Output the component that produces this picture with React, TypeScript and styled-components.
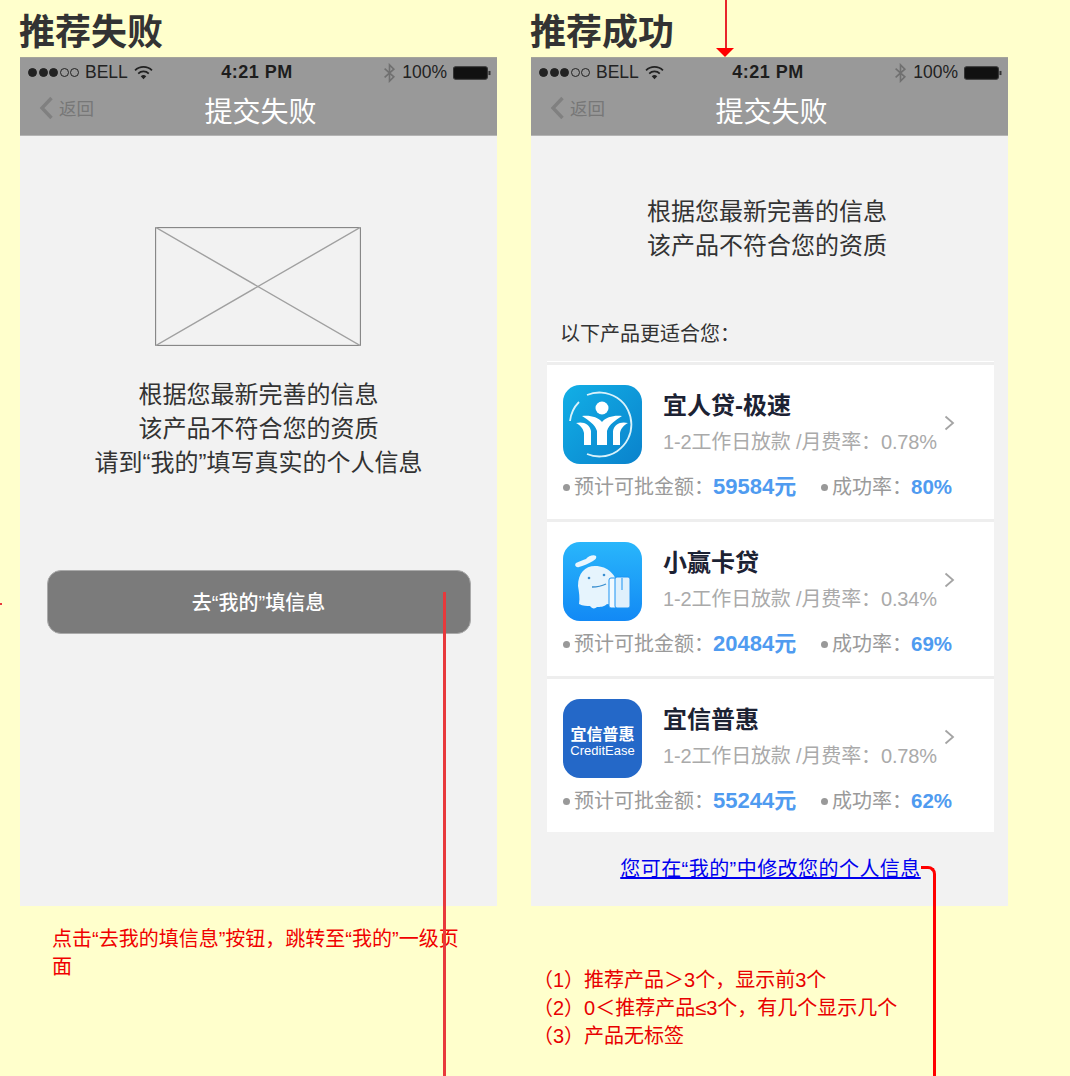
import React from 'react'
import styled, { createGlobalStyle } from 'styled-components'

interface Product {
  name: string
  rate: string
  amount: string
  success: string
  Icon: React.ComponentType
}

const GlobalStyle = createGlobalStyle`
  html, body {
    margin: 0;
    padding: 0;
    background: #ffffcc;
  }
  body {
    font-family: "Liberation Sans", "Noto Sans CJK SC", sans-serif;
  }
`

const WifiIcon = () => (
  <svg width="19" height="15" viewBox="0 0 18 14">
    <path d="M1 5a11.500 11.500 0 0 1 16 0" fill="none" stroke="#222" strokeWidth="1.700" />
    <path d="M4 8a7.200 7.200 0 0 1 10 0" fill="none" stroke="#222" strokeWidth="1.700" />
    <path d="M9 13.500 6.400 10.600a3.800 3.800 0 0 1 5.200 0z" fill="#222" />
  </svg>
)

const BluetoothIcon = () => (
  <svg width="13" height="20" viewBox="0 0 12 18">
    <path d="M1.500 5 10 12.500 6 16.500V1.500L10 5.500 1.500 13" fill="none" stroke="#707070" strokeWidth="1.500" />
  </svg>
)

const BatteryIcon = () => (
  <svg width="38" height="14" viewBox="0 0 37 13">
    <rect x="0.500" y="0.500" width="33" height="12" rx="2" fill="#111" stroke="#333" />
    <rect x="34.500" y="4.500" width="2" height="4" fill="#333" />
  </svg>
)

const BackIcon = () => (
  <svg width="15" height="24" viewBox="0 0 15 24">
    <path d="M12.500 2 3 12l9.500 10" fill="none" stroke="#808080" strokeWidth="3.400" />
  </svg>
)

const ChevronIcon = () => (
  <svg width="11" height="16" viewBox="0 0 11 16">
    <path d="M1.500 1.500 9 8l-7.500 6.500" fill="none" stroke="#a4a4a4" strokeWidth="1.800" />
  </svg>
)

const YirenIcon = () => (
  <svg width="79" height="79" viewBox="0 0 79 79">
    <defs>
      <linearGradient id="yiren" x1="0" y1="0" x2="1" y2="1">
        <stop offset="0" stopColor="#12afe6" />
        <stop offset="1" stopColor="#0a82cc" />
      </linearGradient>
    </defs>
    <rect width="79" height="79" rx="17" fill="url(#yiren)" />
    <path d="M7 36A32 32 0 0 1 16 17" fill="none" stroke="#d9f2fb" strokeWidth="1.800" />
    <path d="M24 10A32 32 0 1 1 24 69" fill="none" stroke="#d9f2fb" strokeWidth="1.800" />
    <circle cx="39" cy="23" r="6.500" fill="#fff" />
    <path d="M19 31c8-1 16 1 20 6 4-5 12-7 20-6-6 4-13 8-15 15v14H34V46c-2-7-9-11-15-15z" fill="#fff" />
    <path d="M13 38c7-2 14 1 15 8v14h-7V48c-1-5-4-8-8-10z" fill="#fff" />
    <path d="M65 38c-7-2-14 1-15 8v14h7V48c1-5 4-8 8-10z" fill="#fff" />
  </svg>
)

const YingIcon = () => (
  <svg width="79" height="79" viewBox="0 0 79 79">
    <defs>
      <linearGradient id="ying" x1="0" y1="0" x2="0" y2="1">
        <stop offset="0" stopColor="#29b6fb" />
        <stop offset="1" stopColor="#1289f5" />
      </linearGradient>
    </defs>
    <rect width="79" height="79" rx="17" fill="url(#ying)" />
    <path d="M13 21c4-2 7-3 10-4 2-3 8-5 10-3 1 2-1 4-3 5-5 3-10 5-14 6-3 1-5-2-3-4z" fill="#eaf6fe" />
    <path d="M15 44c0-13 7-20 17-20 13 0 22 9 23 22l1 14c-5 1-8 3-12 2-3 3-7 3-10 3-2 2-5 2-7-1-3 0-7 0-11-2 1-6 0-12-1-18z" fill="#e6f4fd" />
    <path d="M29 45c6 0 10-1 14-3" fill="none" stroke="#3a8fd0" strokeWidth="1.300" />
    <circle cx="26" cy="36" r="1.300" fill="#3a8fd0" />
    <circle cx="41" cy="33" r="1.300" fill="#3a8fd0" />
    <rect x="46" y="36" width="8" height="30" rx="2" fill="#f2faff" stroke="#1b93f3" />
    <rect x="52" y="35" width="15" height="31" rx="2" fill="#dff0fc" stroke="#1b93f3" />
    <path d="M59 36v12" stroke="#1b93f3" strokeWidth="1" />
  </svg>
)

const CreditEaseIcon = () => (
  <LogoTile>
    <LogoCn>宜信普惠</LogoCn>
    <LogoEn>CreditEase</LogoEn>
  </LogoTile>
)

const PRODUCTS: Product[] = [
  { name: '宜人贷-极速', rate: '0.78%', amount: '59584元', success: '80%', Icon: YirenIcon },
  { name: '小赢卡贷', rate: '0.34%', amount: '20484元', success: '69%', Icon: YingIcon },
  { name: '宜信普惠', rate: '0.78%', amount: '55244元', success: '62%', Icon: CreditEaseIcon },
]

const PhoneHeader = () => (
  <Header>
    <StatusBar>
      <StatusSide>
        <Signal>
          <SignalDot $on />
          <SignalDot $on />
          <SignalDot $on />
          <SignalDot />
          <SignalDot />
        </Signal>
        BELL
        <WifiIcon />
      </StatusSide>
      <StatusTime>4:21 PM</StatusTime>
      <StatusSide $end>
        <BluetoothIcon />
        100%
        <BatteryIcon />
      </StatusSide>
    </StatusBar>
    <NavBar>
      <BackLink>
        <BackIcon />
        返回
      </BackLink>
      <NavTitle>提交失败</NavTitle>
    </NavBar>
  </Header>
)

const App = () => (
  <Canvas>
    <GlobalStyle />
    <Column>
      <Heading>推荐失败</Heading>
      <Phone>
        <PhoneHeader />
        <FailBody>
          <Placeholder viewBox="0 0 206 119" preserveAspectRatio="none">
            <rect x="0.500" y="0.500" width="205" height="118" fill="none" stroke="#888" strokeWidth="1.300" />
            <path d="M0 0 206 119M206 0 0 119" stroke="#a0a0a0" strokeWidth="1.400" />
          </Placeholder>
          <FailMessage>
            根据您最新完善的信息
            <br />
            该产品不符合您的资质
            <br />
            请到“我的”填写真实的个人信息
          </FailMessage>
          <PrimaryButton>去“我的”填信息</PrimaryButton>
        </FailBody>
      </Phone>
      <FailNote>点击“去我的填信息”按钮，跳转至“我的”一级页面</FailNote>
    </Column>

    <Column>
      <Heading>推荐成功</Heading>
      <Phone>
        <PhoneHeader />
        <SuccessBody>
          <SuccessMessage>
            根据您最新完善的信息
            <br />
            该产品不符合您的资质
          </SuccessMessage>
          <ListTitle>以下产品更适合您：</ListTitle>
          <ProductList>
            {PRODUCTS.map(({ name, rate, amount, success, Icon }) => (
              <ProductCard key={name}>
                <CardTop>
                  <IconSlot>
                    <Icon />
                  </IconSlot>
                  <CardText>
                    <ProductName>{name}</ProductName>
                    <ProductMeta>1-2工作日放款 /月费率：{rate}</ProductMeta>
                  </CardText>
                  <ChevronSlot>
                    <ChevronIcon />
                  </ChevronSlot>
                </CardTop>
                <StatRow>
                  <Stat $wide>
                    <Bullet />
                    预计可批金额：<StatValue>{amount}</StatValue>
                  </Stat>
                  <Stat>
                    <Bullet />
                    成功率：<StatValue $small>{success}</StatValue>
                  </Stat>
                </StatRow>
              </ProductCard>
            ))}
          </ProductList>
          <EditLink href="#">您可在“我的”中修改您的个人信息</EditLink>
        </SuccessBody>
      </Phone>
      <RuleNote>
        （1）推荐产品＞3个，显示前3个
        <br />
        （2）0＜推荐产品≤3个，有几个显示几个
        <br />
        （3）产品无标签
      </RuleNote>
    </Column>

    <TopArrowLine />
    <TopArrowHead />
    <EdgeMark />
    <ButtonConnector />
    <LinkConnector />
  </Canvas>
)

const Canvas = styled.div`
  position: relative;
  display: flex;
  gap: 34px;
  width: 1070px;
  height: 1076px;
  padding-left: 20px;
  box-sizing: border-box;
  overflow: hidden;
  background: #ffffcc;
`

const Column = styled.div`
  display: flex;
  flex-direction: column;
  width: 477px;
`

const Heading = styled.h1`
  height: 57px;
  margin: 0 0 0 -1px;
  font-size: 36px;
  font-weight: 700;
  line-height: 66px;
  color: #333;
`

const Phone = styled.div`
  display: flex;
  flex-direction: column;
  height: 849px;
  background: #f2f2f2;
`

const Header = styled.header`
  display: flex;
  flex-direction: column;
  height: 79px;
  background: #999;
  border-top: 1px solid #a5a59a;
  border-bottom: 1px solid #b4b4b4;
  box-sizing: border-box;
`

const StatusBar = styled.div`
  display: grid;
  grid-template-columns: 1fr auto 1fr;
  align-items: center;
  height: 29px;
  padding: 0 6px 0 8px;
  font-size: 17.500px;
  color: #222;
`

const StatusSide = styled.div<{ $end?: boolean }>`
  display: flex;
  align-items: center;
  justify-content: ${(p) => (p.$end ? 'flex-end' : 'flex-start')};
  gap: 6px;
`

const StatusTime = styled.div`
  margin-right: 5px;
  font-size: 18px;
  font-weight: 700;
  letter-spacing: 0.500px;
  color: #1d1d1d;
`

const Signal = styled.span`
  display: flex;
  gap: 1.500px;
`

const SignalDot = styled.span<{ $on?: boolean }>`
  width: 9px;
  height: 9px;
  box-sizing: border-box;
  border: 1px solid #222;
  border-radius: 50%;
  background: ${(p) => (p.$on ? '#222' : 'transparent')};
`

const NavBar = styled.nav`
  display: grid;
  grid-template-columns: 1fr auto 1fr;
  align-items: center;
  flex: 1;
  padding: 0 15px 0 19px;
`

const BackLink = styled.span`
  display: flex;
  align-items: center;
  gap: 5px;
  margin-bottom: 7px;
  font-size: 17.500px;
  color: #777;
`

const NavTitle = styled.div`
  margin-bottom: 2px;
  font-size: 28px;
  color: #fff;
`

const FailBody = styled.main`
  display: flex;
  flex-direction: column;
  align-items: center;
  padding: 91px 26px 0 24px;
`

const Placeholder = styled.svg`
  flex: none;
  width: 206px;
  height: 119px;
`

const Message = styled.p`
  margin: 32px 0 0;
  font-size: 24px;
  line-height: 34px;
  text-align: center;
  color: #333;
`

const FailMessage = styled(Message)`
  margin-left: 2px;
`

const PrimaryButton = styled.button`
  flex: none;
  width: 424px;
  height: 64px;
  margin: 90px 0 0 2px;
  padding-bottom: 2px;
  border: 1px solid #aaa;
  border-radius: 14px;
  background: #7b7b7b;
  font: inherit;
  font-size: 20px;
  font-weight: 500;
  color: #fff;
`

const FailNote = styled.p`
  width: 410px;
  margin: 19px 0 0 32px;
  font-size: 20px;
  line-height: 28px;
  color: #f00000;
`

const SuccessBody = styled.main`
  display: flex;
  flex-direction: column;
`

const SuccessMessage = styled(Message)`
  margin: 59px 0 0 -5px;
`

const ListTitle = styled.h2`
  margin: 57px 0 0 29px;
  font-size: 20px;
  font-weight: 400;
  line-height: 28px;
  color: #333;
`

const ProductList = styled.div`
  width: 447px;
  height: 471px;
  margin: 13px 0 0 16px;
  padding-top: 1px;
  box-sizing: border-box;
  overflow: hidden;
  background: #fff;
`

const ProductCard = styled.article`
  height: 157px;
  box-sizing: border-box;
  padding: 20px 39px 0 16px;
  border-top: 3px solid #eeeeee;
`

const CardTop = styled.div`
  display: flex;
  gap: 21px;
`

const IconSlot = styled.div`
  flex: none;
  width: 79px;
  height: 79px;
`

const CardText = styled.div`
  flex: 1;
  padding-top: 4px;
`

const ProductName = styled.h3`
  margin: 0;
  font-size: 24px;
  font-weight: 700;
  line-height: 34px;
  color: #1c2233;
`

const ProductMeta = styled.div`
  margin-top: 5px;
  font-size: 20px;
  line-height: 28px;
  letter-spacing: -0.150px;
  white-space: nowrap;
  color: #aaa;
`

const ChevronSlot = styled.div`
  flex: none;
  margin: 30px 0 0 -14px;
`

const StatRow = styled.div`
  display: flex;
  margin-top: 9px;
`

const Stat = styled.div<{ $wide?: boolean }>`
  display: flex;
  align-items: center;
  width: ${(p) => (p.$wide ? '258px' : 'auto')};
  font-size: 20px;
  line-height: 28px;
  white-space: nowrap;
  color: #9a9a9a;
`

const Bullet = styled.span`
  flex: none;
  width: 7px;
  height: 7px;
  margin-right: 4px;
  border-radius: 50%;
  background: #999;
`

const StatValue = styled.strong<{ $small?: boolean }>`
  margin-left: -1px;
  font-size: ${(p) => (p.$small ? '20.500px' : '22px')};
  color: #4f9bf0;
`

const LogoTile = styled.div`
  display: flex;
  flex-direction: column;
  align-items: center;
  justify-content: center;
  width: 79px;
  height: 79px;
  padding-top: 6px;
  box-sizing: border-box;
  border-radius: 17px;
  background: #2468c8;
  color: #fff;
`

const LogoCn = styled.div`
  font-size: 16px;
  font-weight: 700;
  line-height: 18px;
`

const LogoEn = styled.div`
  font-size: 13px;
  line-height: 14px;
`

const EditLink = styled.a`
  align-self: center;
  margin: 23px 0 0 2px;
  font-size: 20px;
  line-height: 28px;
  letter-spacing: 0.450px;
  color: #0000ee;
`

const RuleNote = styled.p`
  margin: 60px 0 0 2px;
  font-size: 20px;
  line-height: 28px;
  color: #e80000;
`

const TopArrowLine = styled.div`
  position: absolute;
  left: 725px;
  top: 0;
  width: 1.500px;
  height: 49px;
  background: #e8262b;
`

const TopArrowHead = styled.div`
  position: absolute;
  left: 716px;
  top: 48px;
  border-style: solid;
  border-width: 9px 9px 0;
  border-color: #f00 transparent transparent;
`

const EdgeMark = styled.div`
  position: absolute;
  left: 0;
  top: 603px;
  width: 2px;
  height: 2px;
  background: #e8393c;
`

const ButtonConnector = styled.div`
  position: absolute;
  left: 443px;
  top: 592px;
  width: 2.500px;
  height: 484px;
  background: #e8393c;
`

const LinkConnector = styled.div`
  position: absolute;
  left: 921px;
  top: 866px;
  width: 12px;
  height: 220px;
  border-top: 3px solid #f00;
  border-right: 3px solid #f00;
  border-top-right-radius: 8px;
`

export default App
